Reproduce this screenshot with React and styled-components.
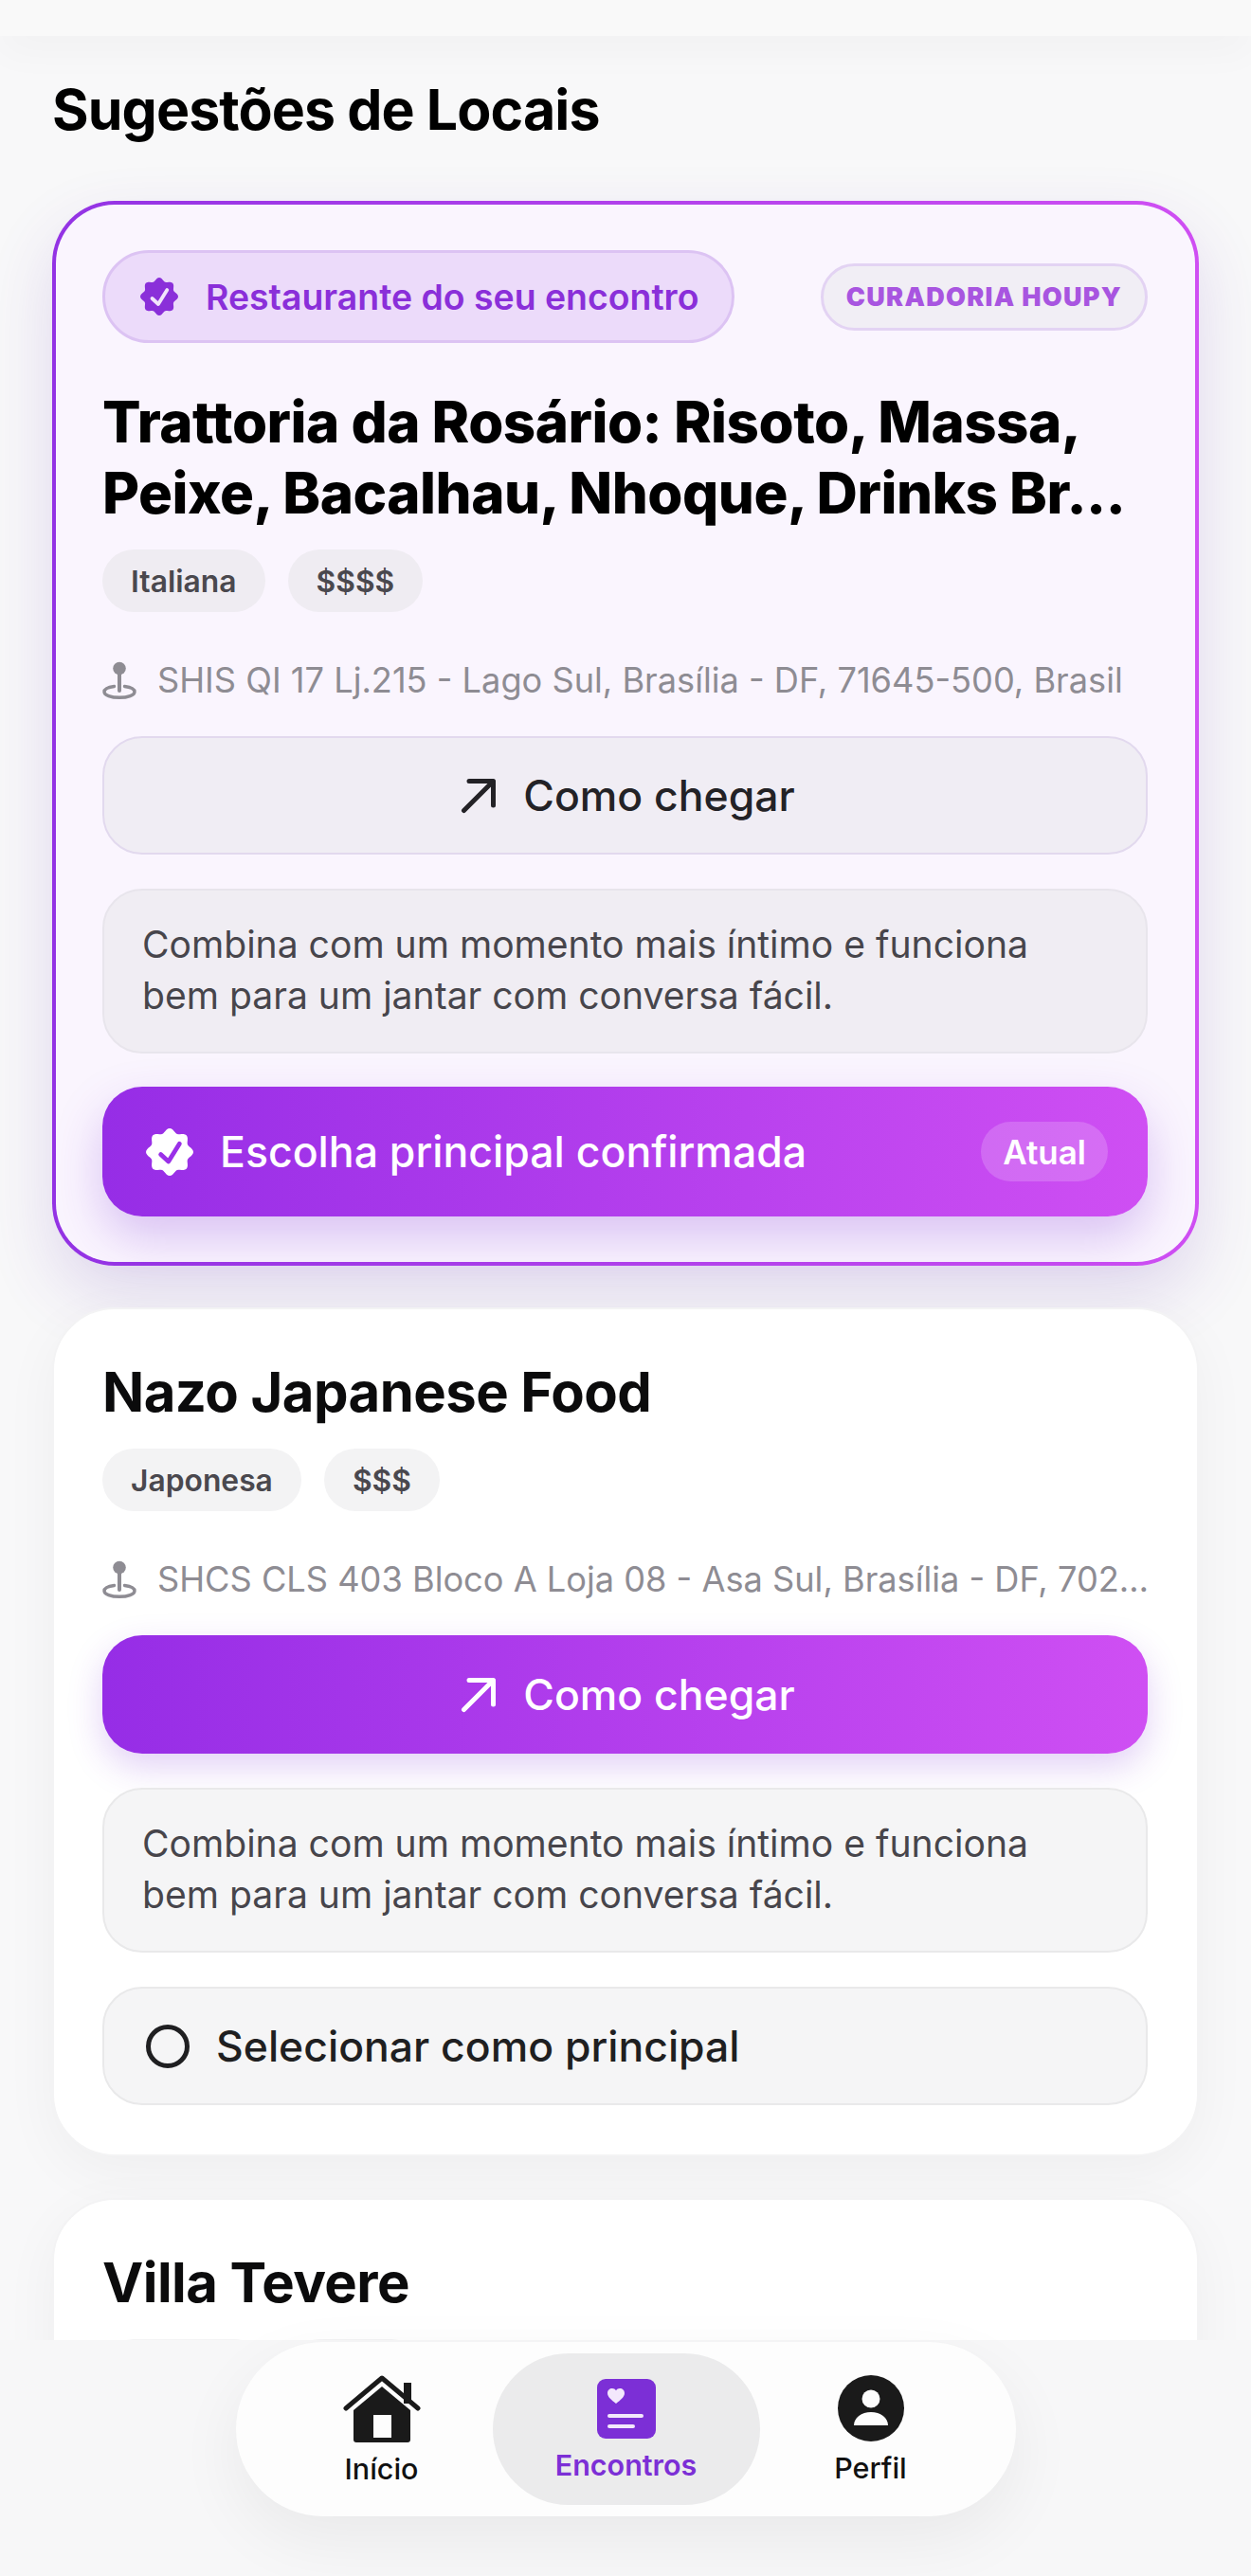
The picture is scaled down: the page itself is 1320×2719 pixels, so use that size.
import React from 'react';
import styled, { createGlobalStyle } from 'styled-components';

const GlobalStyle = createGlobalStyle`
  html, body {
    margin: 0;
    padding: 0;
    background: #f8f8f9;
    font-family: Inter, "Liberation Sans", sans-serif;
    -webkit-font-smoothing: antialiased;
  }
  * { box-sizing: border-box; }
`;

const NOTE = 'Combina com um momento mais íntimo e funciona bem para um jantar com conversa fácil.';

// scalloped outline of the verified seal, eight lobes with one pointing up
const SEAL_PATH = Array.from({ length: 96 }, (_, i) => {
  const angle = (i / 96) * Math.PI * 2;
  const radius = 18.2 + 1.8 * Math.cos(angle * 8);
  return `${i === 0 ? 'M' : 'L'}${(Math.sin(angle) * radius).toFixed(2)} ${(-Math.cos(angle) * radius).toFixed(2)}`;
}).join(' ') + 'Z';

const SealIcon = ({ size, fill, check }) => (
  <svg viewBox="-20 -20 40 40" width={size} height={size}>
    <path d={SEAL_PATH} fill={fill} />
    <path d="M-7.500 2-1 8 8.300-7" fill="none" stroke={check} strokeWidth="3.800" strokeLinecap="round" strokeLinejoin="round" />
  </svg>
);

const PinIcon = () => (
  <PinSvg viewBox="0 0 36 40" width="36" height="40" fill="none">
    <path d="M12.500 26.500C6.500 27.300 2 29.300 2 32.200 2 35.700 9 38.300 18 38.300s16-2.600 16-6.100c0-2.900-4.500-4.900-10.500-5.700" stroke="#8e8c93" strokeWidth="3.4" strokeLinecap="round" />
    <rect x="16" y="10" width="4" height="23" rx="2" fill="#8e8c93" />
    <circle cx="18" cy="7.500" r="6.800" fill="#8e8c93" />
  </PinSvg>
);

const ArrowIcon = () => (
  <svg viewBox="0 0 38 38" width="38" height="38" fill="none" stroke="currentColor" strokeWidth="5" strokeLinecap="round" strokeLinejoin="round">
    <path d="M3.500 34.500 34 4" />
    <path d="M9 3.500h25.500V29" />
  </svg>
);

const HomeIcon = () => (
  <svg viewBox="0 0 82 72" width="82" height="72">
    <path d="M11 38 41 13l30 25v31a3 3 0 0 1-3 3H14a3 3 0 0 1-3-3Z" fill="#1a1a1a" />
    <rect x="32" y="43" width="19" height="24" fill="#fdfdfd" />
    <rect x="64" y="9" width="8" height="22" fill="#1a1a1a" />
    <path d="M3 36 41 4l38 32" fill="none" stroke="#1a1a1a" strokeWidth="5" strokeLinecap="round" strokeLinejoin="round" />
  </svg>
);

const DateCardIcon = () => (
  <svg viewBox="0 0 62 63" width="62" height="63">
    <rect width="62" height="63" rx="9" fill="#7c2fd6" />
    <path d="M20 26C15 22 11 19 11 15c0-3 2.200-5 5-5 1.700 0 3.100.800 4 2.200.900-1.400 2.300-2.200 4-2.200 2.800 0 5 2 5 5 0 4-4 7-9 11Z" fill="#f3e8fc" />
    <rect x="11" y="37" width="38" height="4" rx="2" fill="#f3e8fc" />
    <rect x="11" y="48" width="29" height="4" rx="2" fill="#f3e8fc" />
  </svg>
);

const ProfileIcon = () => (
  <svg viewBox="0 0 70 70" width="70" height="70">
    <circle cx="35" cy="35" r="35" fill="#1a1a1a" />
    <circle cx="35" cy="25" r="9.500" fill="#fdfdfd" />
    <path d="M17 53c0-8 8-14 18-14s18 6 18 14Z" fill="#fdfdfd" />
  </svg>
);

const Place = ({ name, chips, address, note, featured }) => (
  <Card $featured={featured}>
    {featured && (
      <BadgeRow>
        <EncounterBadge>
          <SealIcon size={40} fill="#8a2fd9" check="#f1e4fb" />
          Restaurante do seu encontro
        </EncounterBadge>
        <CurationBadge>CURADORIA HOUPY</CurationBadge>
      </BadgeRow>
    )}
    <PlaceName $featured={featured}>{name}</PlaceName>
    <ChipRow>
      {chips.map((chip) => (
        <Chip key={chip} $featured={featured}>{chip}</Chip>
      ))}
    </ChipRow>
    <Address>
      <PinIcon />
      <AddressText>{address}</AddressText>
    </Address>
    <DirectionsButton $featured={featured}>
      <ArrowIcon />
      Como chegar
    </DirectionsButton>
    <Note $featured={featured}>{note}</Note>
    {featured ? (
      <ConfirmedBar>
        <ConfirmedLabel>
          <SealIcon size={50} fill="#fff" check="#9a30e8" />
          Escolha principal confirmada
        </ConfirmedLabel>
        <CurrentTag>Atual</CurrentTag>
      </ConfirmedBar>
    ) : (
      <SelectRow>
        <RadioDot />
        Selecionar como principal
      </SelectRow>
    )}
  </Card>
);

export default function App() {
  return (
    <Page>
      <GlobalStyle />
      <TopBar />
      <Heading>Sugestões de Locais</Heading>
      <CardList>
        <Place
          featured
          name="Trattoria da Rosário: Risoto, Massa, Peixe, Bacalhau, Nhoque, Drinks Br..."
          chips={['Italiana', '$$$$']}
          address="SHIS QI 17 Lj.215 - Lago Sul, Brasília - DF, 71645-500, Brasil"
          note={NOTE}
        />
        <Place
          name="Nazo Japanese Food"
          chips={['Japonesa', '$$$']}
          address="SHCS CLS 403 Bloco A Loja 08 - Asa Sul, Brasília - DF, 70236-510, Brasil"
          note={NOTE}
        />
        <Place
          name="Villa Tevere"
          chips={['Italiana', '$$$$']}
          address="SCLS 115 Bloco A Loja 02 - Asa Sul, Brasília - DF, Brasil"
          note={NOTE}
        />
      </CardList>
      <BottomArea>
        <NavPill>
          <NavItem>
            <HomeIcon />
            <NavLabel>Início</NavLabel>
          </NavItem>
          <NavItem $active>
            <DateCardIcon />
            <NavLabel $active>Encontros</NavLabel>
          </NavItem>
          <NavItem>
            <ProfileIcon />
            <NavLabel>Perfil</NavLabel>
          </NavItem>
        </NavPill>
      </BottomArea>
    </Page>
  );
}

const Page = styled.div`
  position: relative;
  width: 1320px;
  height: 2719px;
  overflow: hidden;
  background: #f8f8f9;
`;

const TopBar = styled.div`
  height: 38px;
  background: #f9f9f9;
  box-shadow: 0 14px 44px rgba(0, 0, 0, 0.035);
`;

const Heading = styled.h1`
  margin: 43px 0 0 55px;
  font-size: 59px;
  line-height: 70px;
  font-weight: 700;
  letter-spacing: -0.9px;
  color: #000;
`;

const CardList = styled.div`
  display: flex;
  flex-direction: column;
  gap: 44px;
  margin-top: 61px;
  padding: 0 55px;
`;

const Card = styled.section`
  display: flex;
  flex-direction: column;
  padding: ${(p) => (p.$featured ? '48px 50px 48px 49px' : '50px 52px 52px 51px')};
  border-radius: 66px;
  border: ${(p) => (p.$featured ? '4px solid transparent' : '2px solid #f3f3f4')};
  background: ${(p) =>
    p.$featured
      ? 'linear-gradient(#faf5fe, #faf5fe) padding-box, linear-gradient(90deg, #9333e4, #cf4ff3) border-box'
      : '#fff'};
  box-shadow: ${(p) =>
    p.$featured ? '0 30px 70px rgba(100, 50, 180, 0.16)' : '0 16px 60px rgba(0, 0, 0, 0.045)'};
`;

const BadgeRow = styled.div`
  display: flex;
  align-items: center;
  justify-content: space-between;
  margin-bottom: 46px;
`;

const EncounterBadge = styled.div`
  display: flex;
  align-items: center;
  gap: 29px;
  height: 98px;
  padding: 0 35px 0 37px;
  border-radius: 49px;
  border: 3px solid #dcc3f3;
  background: #ecdbfa;
  color: #8a2fd9;
  font-size: 37.4px;
  font-weight: 600;
`;

const CurationBadge = styled.div`
  display: flex;
  align-items: center;
  height: 71px;
  padding: 0 24px;
  border-radius: 36px;
  border: 3px solid #e3d3f3;
  background: #f1eef5;
  color: #a855e0;
  font-size: 27px;
  font-weight: 900;
  letter-spacing: 1.3px;
`;

const PlaceName = styled.h2`
  margin: 0;
  font-size: ${(p) => (p.$featured ? '60px' : '58px')};
  line-height: 75px;
  font-weight: ${(p) => (p.$featured ? 800 : 700)};
  letter-spacing: ${(p) => (p.$featured ? '-0.5px' : '-0.55px')};
  color: ${(p) => (p.$featured ? '#000' : '#0b0b0c')};
`;

const ChipRow = styled.div`
  display: flex;
  gap: 24px;
  margin-top: 22px;
`;

const Chip = styled.span`
  display: flex;
  align-items: center;
  height: 66px;
  padding: 0 30px;
  border-radius: 33px;
  background: ${(p) => (p.$featured ? '#efecf2' : '#f3f3f4')};
  color: #4a484e;
  font-size: 31.8px;
  font-weight: 600;
`;

const Address = styled.div`
  display: flex;
  align-items: center;
  gap: 22px;
  height: 40px;
  margin-top: 52px;
`;

const PinSvg = styled.svg`
  flex: none;
`;

const AddressText = styled.span`
  flex: 1;
  min-width: 0;
  margin-right: -6px;
  overflow: hidden;
  white-space: nowrap;
  text-overflow: ellipsis;
  color: #8e8c93;
  font-size: 36.2px;
`;

const DirectionsButton = styled.button`
  display: flex;
  align-items: center;
  justify-content: center;
  gap: 28px;
  width: 100%;
  height: 125px;
  margin-top: 39px;
  padding: 0 0 0 6px;
  border-radius: 42px;
  font-family: inherit;
  font-size: 44.5px;
  font-weight: 500;
  border: ${(p) => (p.$featured ? '2px solid #e2d9ee' : 'none')};
  background: ${(p) => (p.$featured ? '#f0edf4' : 'linear-gradient(90deg, #962de6, #cf4ff3)')};
  color: ${(p) => (p.$featured ? '#232226' : '#fff')};
  box-shadow: ${(p) => (p.$featured ? 'none' : '0 14px 36px rgba(124, 47, 214, 0.22)')};
`;

const Note = styled.p`
  margin: 36px 0 0;
  padding: 30px 40px;
  height: 174px;
  border-radius: 42px;
  border: 2px solid ${(p) => (p.$featured ? '#e8e5ec' : '#e9e9ea')};
  background: ${(p) => (p.$featured ? '#f0edf3' : '#f5f5f6')};
  color: #47454b;
  font-size: 39.1px;
  line-height: 54px;
`;

const ConfirmedBar = styled.div`
  display: flex;
  align-items: center;
  justify-content: space-between;
  height: 137px;
  margin-top: 35px;
  padding: 0 42px 0 46px;
  border-radius: 42px;
  background: linear-gradient(90deg, #962de6, #cf4ff3);
  color: #fff;
  box-shadow: 0 22px 50px rgba(124, 47, 214, 0.26);
`;

const ConfirmedLabel = styled.div`
  display: flex;
  align-items: center;
  gap: 28px;
  font-size: 44.6px;
  font-weight: 500;
`;

const CurrentTag = styled.span`
  display: flex;
  align-items: center;
  height: 63px;
  padding: 0 23px;
  border-radius: 32px;
  background: rgba(255, 255, 255, 0.18);
  font-size: 35px;
  font-weight: 600;
`;

const SelectRow = styled.div`
  display: flex;
  align-items: center;
  gap: 28px;
  height: 125px;
  margin-top: 36px;
  padding: 0 44px;
  border-radius: 42px;
  border: 2px solid #e9e9ea;
  background: #f5f5f6;
  color: #1f1f21;
  font-size: 44.5px;
  font-weight: 500;
`;

const RadioDot = styled.span`
  width: 46px;
  height: 46px;
  border-radius: 50%;
  border: 5px solid #1f1f21;
`;

const BottomArea = styled.div`
  position: absolute;
  left: 0;
  right: 0;
  bottom: 0;
  display: flex;
  justify-content: center;
  height: 249px;
  padding-top: 2px;
  background: #f7f7f8;
`;

const NavPill = styled.nav`
  display: flex;
  align-items: center;
  width: 823px;
  height: 184px;
  padding-left: 37px;
  border-radius: 92px;
  background: #fdfdfd;
  box-shadow: 0 24px 70px rgba(0, 0, 0, 0.06);
`;

const NavItem = styled.div`
  display: flex;
  flex-direction: column;
  align-items: center;
  justify-content: center;
  gap: 10px;
  width: ${(p) => (p.$active ? '282px' : '234px')};
  height: 160px;
  padding-top: 2px;
  border-radius: 80px;
  background: ${(p) => (p.$active ? '#ebebec' : 'transparent')};
`;

const NavLabel = styled.span`
  font-size: 30.5px;
  line-height: 36px;
  font-weight: ${(p) => (p.$active ? 600 : 500)};
  color: ${(p) => (p.$active ? '#7c2fd6' : '#111')};
`;
